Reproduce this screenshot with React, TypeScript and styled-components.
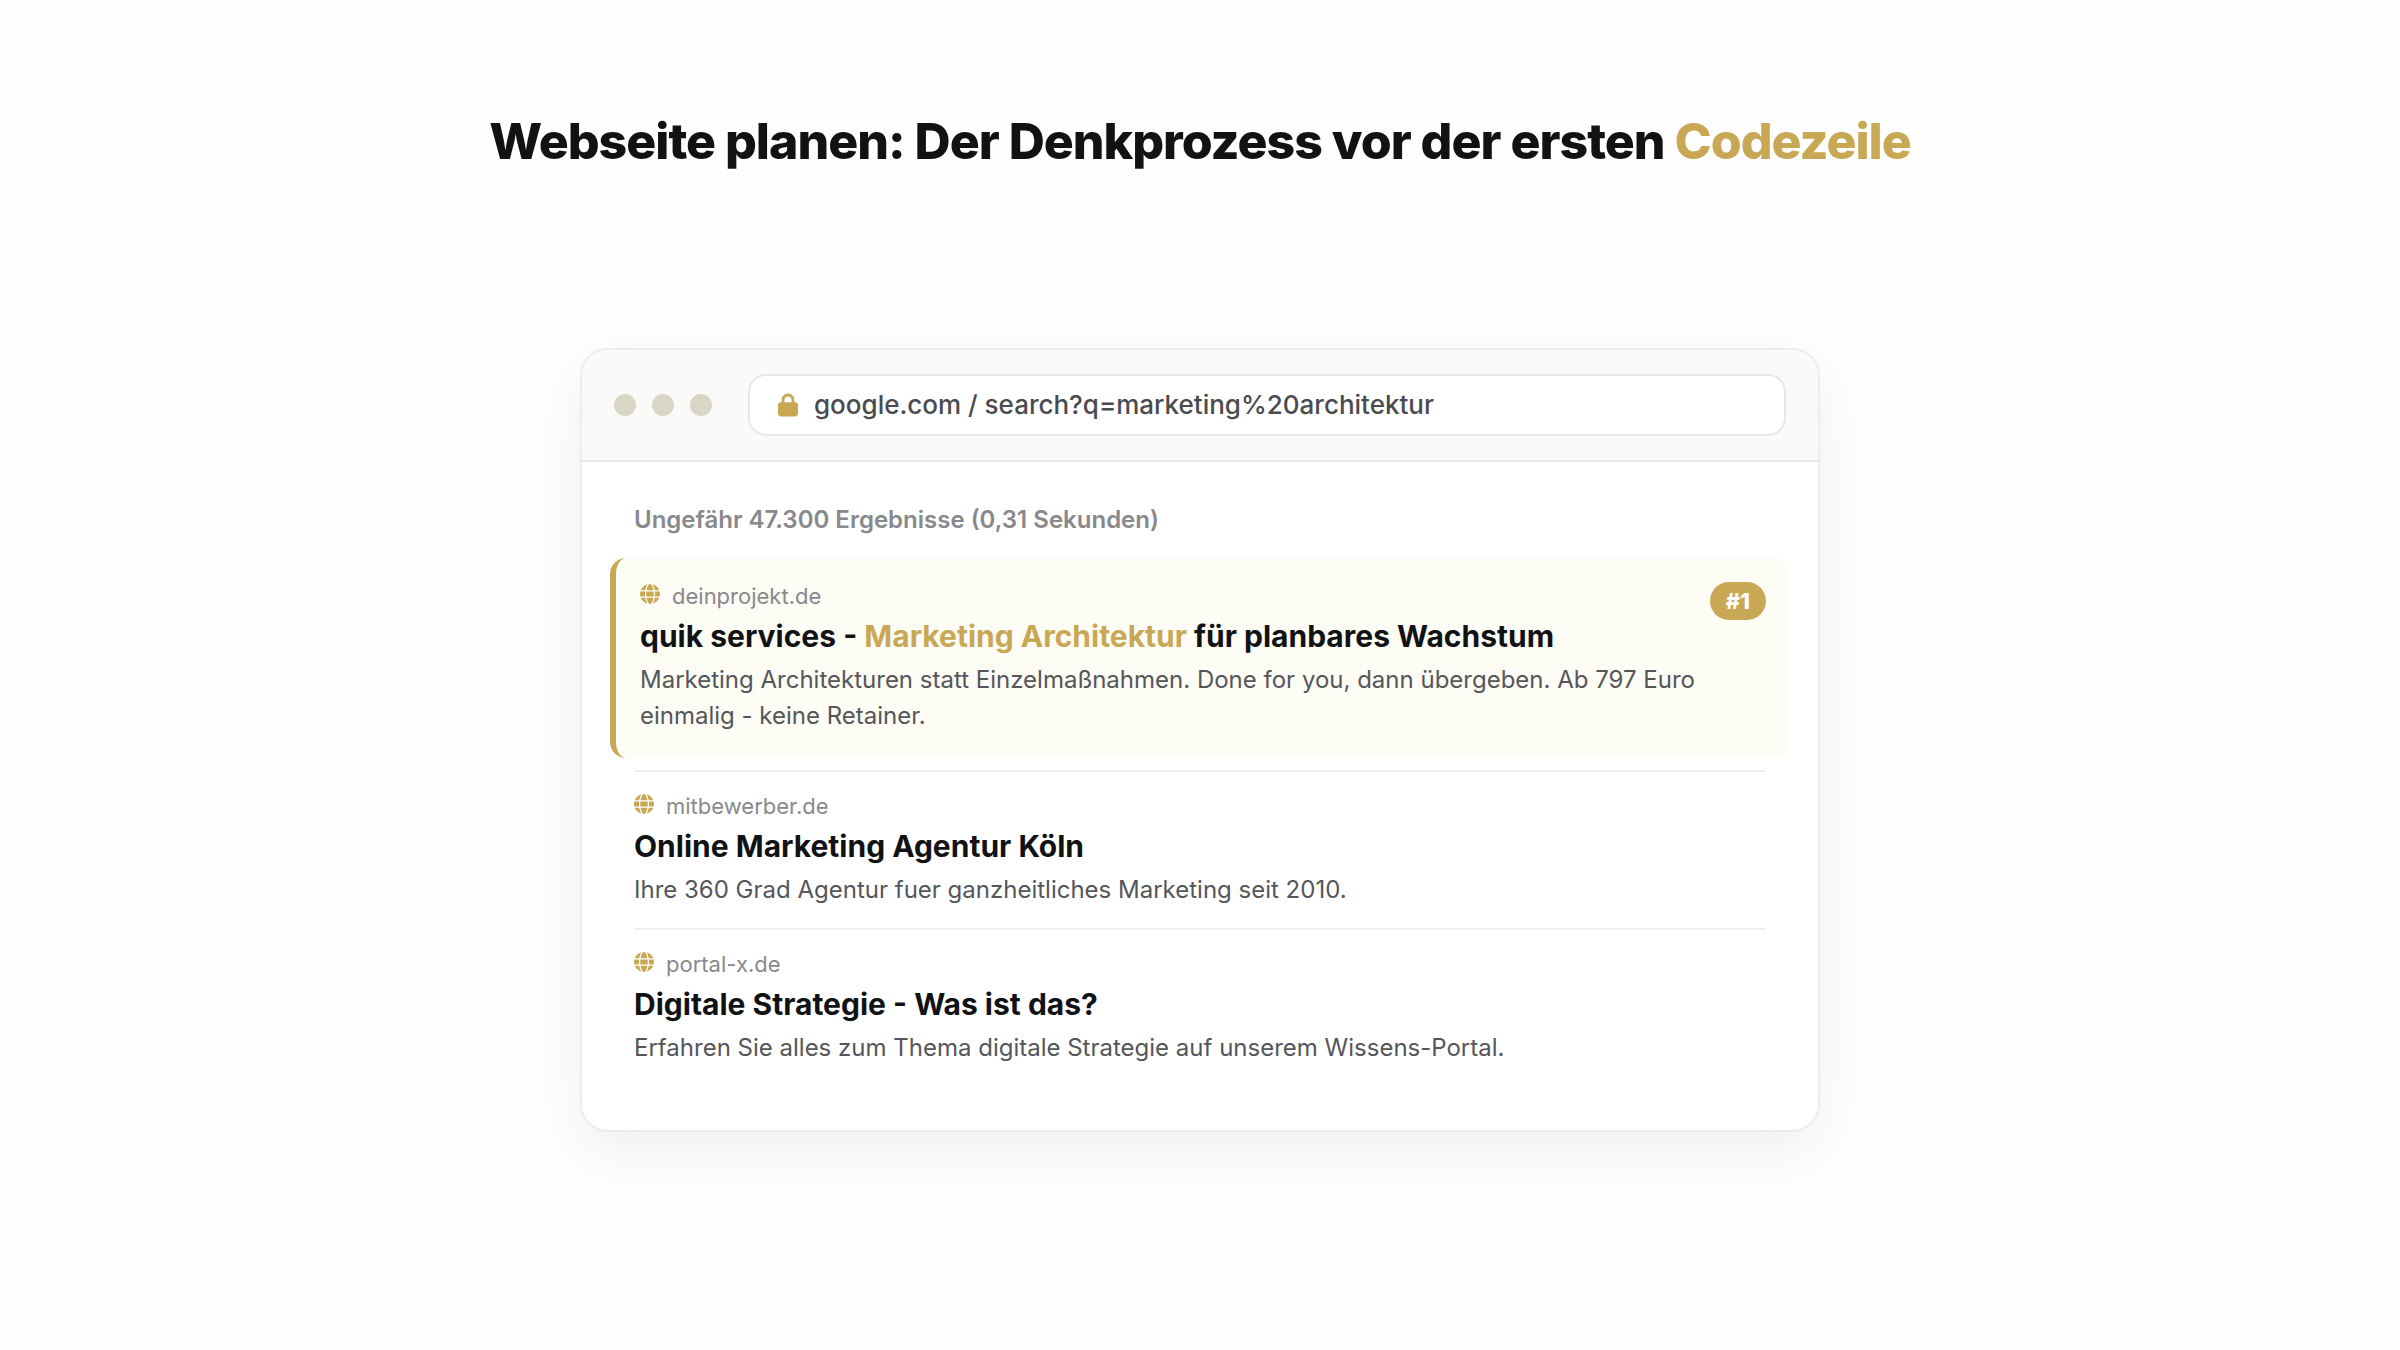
import React from "react";
import styled, { createGlobalStyle } from "styled-components";
import { FaGlobe, FaLock } from "react-icons/fa6";

const GlobalStyle = createGlobalStyle`
  *, *::before, *::after { box-sizing: border-box; }
  body {
    margin: 0;
    background: #fefefe;
    color: #111214;
    font-family: Inter, "Liberation Sans", sans-serif;
  }
`;

const gold = "#c9a855";
const line = "#e8e8e6";

const Page = styled.main`
  display: flex;
  flex-direction: column;
  align-items: center;
  gap: 176px;
  padding: 110px 40px;
`;

const Headline = styled.h1`
  margin: 0;
  font-size: 50px;
  line-height: 62px;
  font-weight: 800;
  letter-spacing: -0.02em;
  text-align: center;
`;

const Accent = styled.span`
  color: ${gold};
`;

const Browser = styled.section`
  width: 100%;
  max-width: 1240px;
  overflow: hidden;
  background: #fff;
  border: 2px solid #ececec;
  border-radius: 28px;
  box-shadow: 0 20px 60px rgba(0, 0, 0, 0.06);
`;

const Toolbar = styled.header`
  display: flex;
  align-items: center;
  gap: 36px;
  padding: 24px 32px;
  background: #fafaf8;
  border-bottom: 2px solid ${line};
`;

const Dots = styled.div`
  display: flex;
  gap: 16px;
`;

const Dot = styled.span`
  width: 22px;
  height: 22px;
  border-radius: 50%;
  background: #dad6c6;
`;

const AddressBar = styled.label`
  display: flex;
  flex: 1;
  align-items: center;
  gap: 16px;
  height: 62px;
  padding: 0 28px;
  background: #fff;
  border: 2px solid ${line};
  border-radius: 18px;
  color: ${gold};
`;

const LockIcon = styled(FaLock)`
  flex: none;
  width: 20px;
  height: 24px;
`;

const Address = styled.input`
  flex: 1;
  min-width: 0;
  padding: 0;
  border: 0;
  outline: 0;
  background: transparent;
  color: #4a4b4f;
  font: 500 26px/32px Inter, "Liberation Sans", sans-serif;
`;

const Results = styled.div`
  padding: 40px 52px 44px;
`;

const Summary = styled.p`
  margin: 0 0 20px;
  color: #88898d;
  font-size: 24px;
  line-height: 36px;
  font-weight: 600;
`;

const Result = styled.article<{ $top?: boolean }>`
  position: relative;
  padding: 20px 0;
  border-top: 2px solid #f0f0f0;
  ${(p) =>
    p.$top &&
    `
    margin: 0 -24px 12px;
    padding: 24px;
    border-top: 0;
    border-left: 6px solid ${gold};
    border-radius: 16px;
    background: #fdfcf5;
  `}
`;

const Site = styled.div`
  display: flex;
  align-items: baseline;
  gap: 12px;
  color: #88898d;
  font-size: 22px;
  line-height: 28px;
`;

const GlobeIcon = styled(FaGlobe)`
  width: 20px;
  height: 20px;
  color: ${gold};
`;

const Title = styled.h2`
  margin: 6px 0;
  font-size: 30px;
  line-height: 40px;
  font-weight: 700;
`;

const TitleLink = styled.a`
  color: inherit;
  text-decoration: none;
`;

const Snippet = styled.p`
  margin: 0;
  color: #55565a;
  font-size: 24px;
  line-height: 36px;
`;

const Rank = styled.span`
  position: absolute;
  top: 24px;
  right: 24px;
  padding: 6px 16px;
  border-radius: 19px;
  background: ${gold};
  color: #fff;
  font-size: 22px;
  line-height: 26px;
  font-weight: 800;
`;

type Entry = {
  site: string;
  title: React.ReactNode;
  text: string;
  rank?: string;
};

const entries: Entry[] = [
  {
    site: "deinprojekt.de",
    title: (
      <>
        quik services - <Accent>Marketing Architektur</Accent> für planbares Wachstum
      </>
    ),
    text: "Marketing Architekturen statt Einzelmaßnahmen. Done for you, dann übergeben. Ab 797 Euro einmalig - keine Retainer.",
    rank: "#1",
  },
  {
    site: "mitbewerber.de",
    title: "Online Marketing Agentur Köln",
    text: "Ihre 360 Grad Agentur fuer ganzheitliches Marketing seit 2010.",
  },
  {
    site: "portal-x.de",
    title: "Digitale Strategie - Was ist das?",
    text: "Erfahren Sie alles zum Thema digitale Strategie auf unserem Wissens-Portal.",
  },
];

export default function App() {
  return (
    <>
      <GlobalStyle />
      <Page>
        <Headline>
          Webseite planen: Der Denkprozess vor der ersten <Accent>Codezeile</Accent>
        </Headline>
        <Browser>
          <Toolbar>
            <Dots>
              <Dot />
              <Dot />
              <Dot />
            </Dots>
            <AddressBar>
              <LockIcon aria-hidden />
              <Address
                type="text"
                aria-label="Adresse"
                readOnly
                value="google.com / search?q=marketing%20architektur"
              />
            </AddressBar>
          </Toolbar>
          <Results>
            <Summary>Ungefähr 47.300 Ergebnisse (0,31 Sekunden)</Summary>
            {entries.map((entry) => (
              <Result key={entry.site} $top={Boolean(entry.rank)}>
                <Site>
                  <GlobeIcon aria-hidden />
                  {entry.site}
                </Site>
                <Title>
                  <TitleLink href="#">{entry.title}</TitleLink>
                </Title>
                <Snippet>{entry.text}</Snippet>
                {entry.rank && <Rank>{entry.rank}</Rank>}
              </Result>
            ))}
          </Results>
        </Browser>
      </Page>
    </>
  );
}
